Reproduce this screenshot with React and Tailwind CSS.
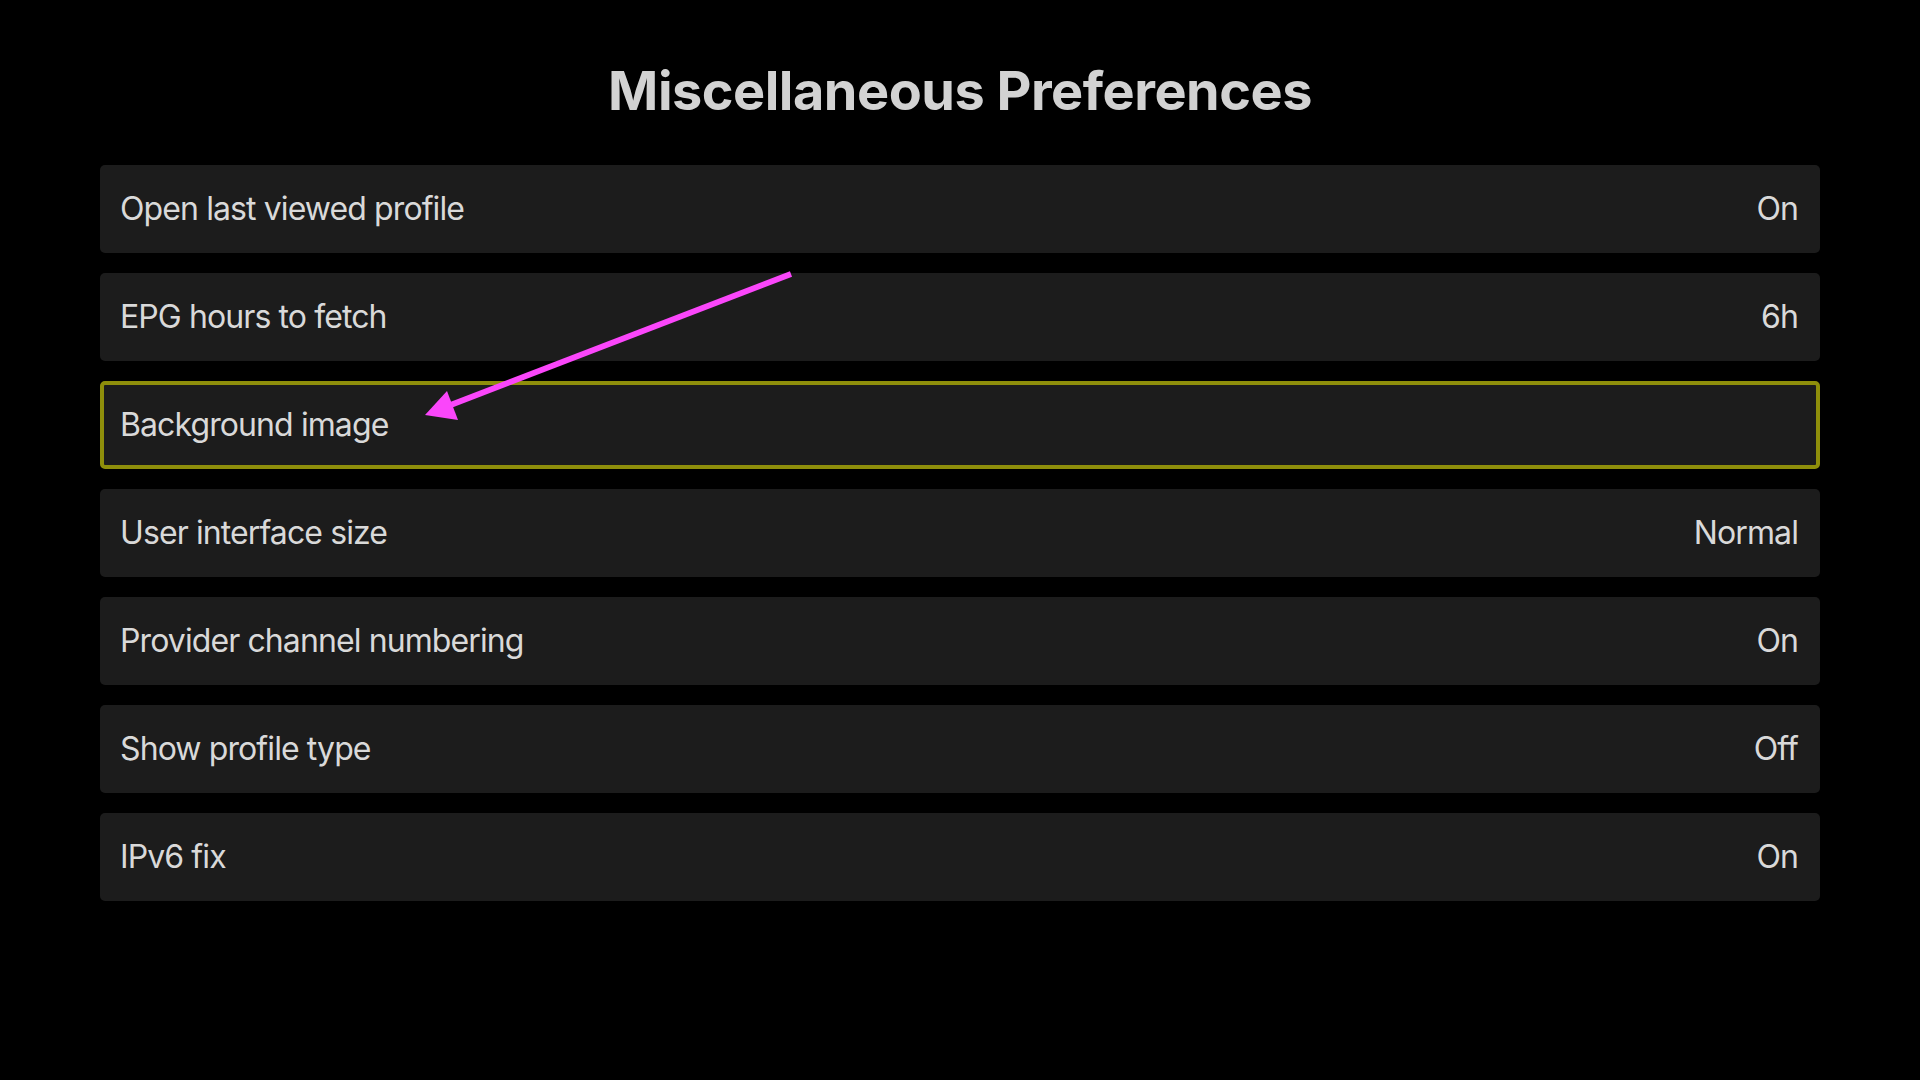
const rows = [
  { label: 'Open last viewed profile', value: 'On' },
  { label: 'EPG hours to fetch', value: '6h' },
  { label: 'Background image', value: '', focused: true },
  { label: 'User interface size', value: 'Normal' },
  { label: 'Provider channel numbering', value: 'On' },
  { label: 'Show profile type', value: 'Off' },
  { label: 'IPv6 fix', value: 'On' },
]

function Row({ label, value, focused }) {
  return (
    <div
      className={
        'h-[88px] rounded-[5px] bg-[#1c1c1c] flex items-center justify-between ' +
        (focused ? 'border-[4px] border-[#8e8e0b] pl-[16px] pr-[18px]' : 'pl-[20px] pr-[22px]')
      }
    >
      <span>{label}</span>
      <span>{value}</span>
    </div>
  )
}

export default function App() {
  return (
    <div
      className="relative min-h-screen w-full bg-black text-[#d9d9d9]"
      style={{ fontFamily: 'Inter, "Noto Sans", sans-serif' }}
    >
      <h1 className="pt-[58px] h-[165px] text-center text-[54px] leading-[66px] font-bold text-[#d2d2d2] tracking-[-0.5px]">
        Miscellaneous Preferences
      </h1>
      <div className="mx-[100px] flex flex-col gap-[20px] text-[32px] tracking-[-0.9px]">
        {rows.map((r) => (
          <Row key={r.label} {...r} />
        ))}
      </div>

      {/* annotation arrow */}
      <svg className="absolute left-0 top-0 pointer-events-none" width="1920" height="1080">
        <line x1="791" y1="274" x2="448" y2="406" stroke="#fa46fa" strokeWidth="6" />
        <polygon points="425,415 447,391 458,420" fill="#fa46fa" />
      </svg>
    </div>
  )
}
